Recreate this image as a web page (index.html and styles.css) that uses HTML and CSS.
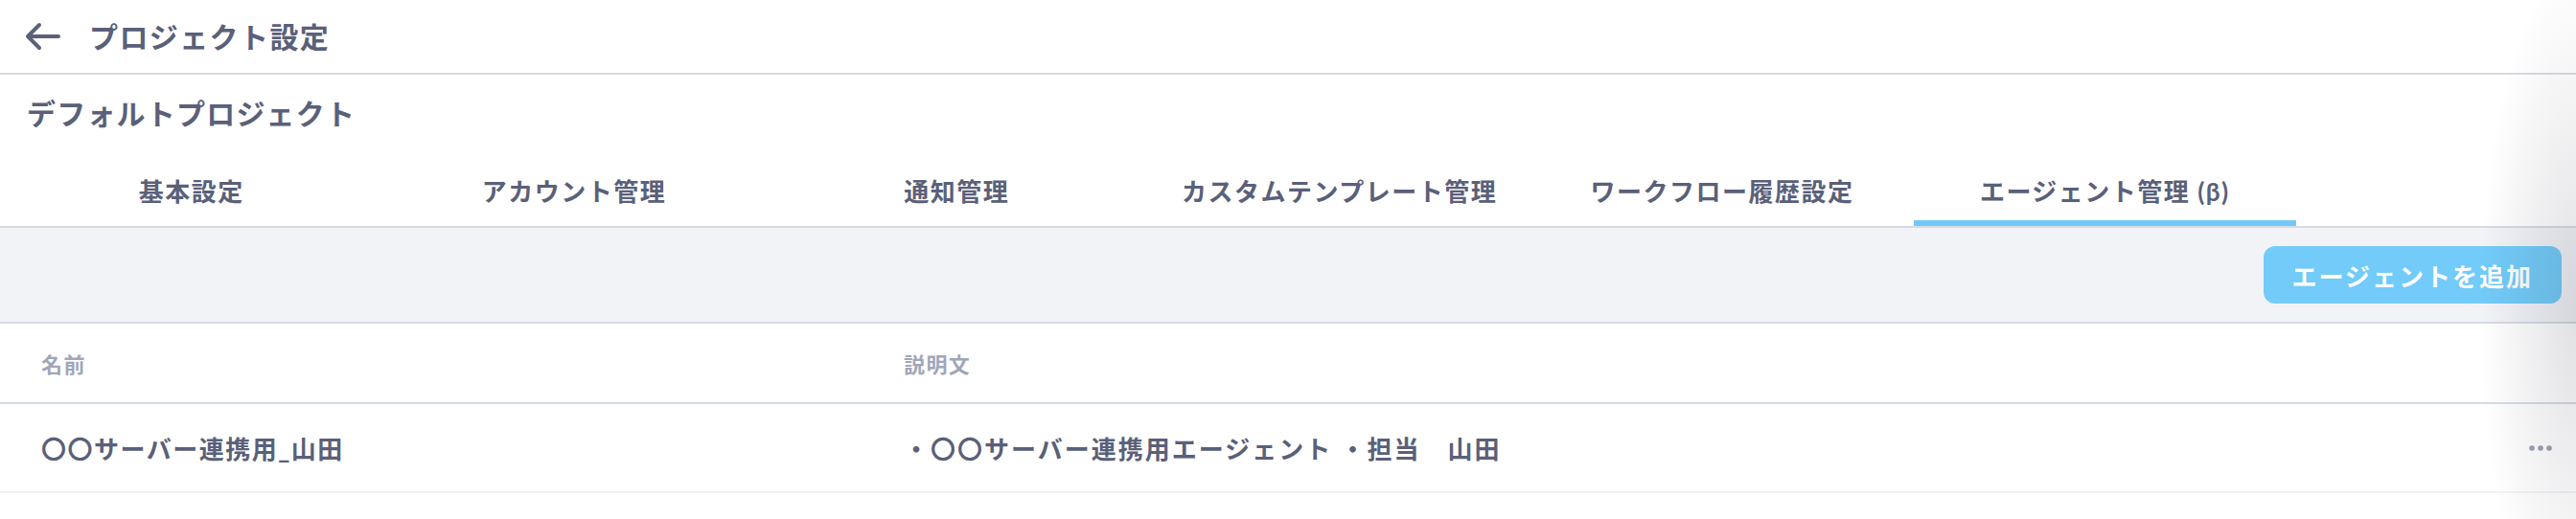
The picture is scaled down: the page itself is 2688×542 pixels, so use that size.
FILE: index.html
```html
<!doctype html>
<html lang="ja">
<head>
<meta charset="utf-8">
<title>プロジェクト設定</title>
<link rel="stylesheet" href="styles.css">
</head>
<body>
<header class="topbar">
  <a class="back" href="#">
    <svg width="38" height="30" viewBox="0 0 38 30">
      <path d="M36 15 H4 M16 3 L4 15 L16 27" fill="none" stroke="#5b6179" stroke-width="4" stroke-linecap="round" stroke-linejoin="round"/>
    </svg>
  </a>
  <h1 class="topbar-title">プロジェクト設定</h1>
</header>

<section class="project">
  <h2 class="project-name">デフォルトプロジェクト</h2>
  <nav class="tabs">
    <a class="tab" href="#">基本設定</a>
    <a class="tab" href="#">アカウント管理</a>
    <a class="tab" href="#">通知管理</a>
    <a class="tab" href="#">カスタムテンプレート管理</a>
    <a class="tab" href="#">ワークフロー履歴設定</a>
    <a class="tab is-active" href="#">エージェント管理 (β)</a>
  </nav>
</section>

<div class="toolbar">
  <button class="btn-add" type="button">エージェントを追加</button>
</div>

<div class="agents">
  <div class="agents-row agents-head">
    <div class="cell">名前</div>
    <div class="cell">説明文</div>
    <div class="cell"></div>
  </div>
  <div class="agents-row">
    <div class="cell">〇〇サーバー連携用_山田</div>
    <div class="cell cell-desc">・〇〇サーバー連携用エージェント ・担当　山田</div>
    <div class="cell cell-menu">
      <svg width="26" height="8" viewBox="0 0 26 8">
        <circle cx="4" cy="4" r="2.8" fill="#9aa0b5"/>
        <circle cx="13" cy="4" r="2.8" fill="#9aa0b5"/>
        <circle cx="22" cy="4" r="2.8" fill="#9aa0b5"/>
      </svg>
    </div>
  </div>
</div>

<div class="edge-shade"></div>
</body>
</html>
```

FILE: styles.css
```css
html, body, h1, h2, div, nav, a, button {
  margin: 0;
  padding: 0;
}

body {
  position: relative;
  min-height: 542px;
  overflow: hidden;
  background: #fff;
  color: #5a6079;
  font-family: Lato, "Noto Sans CJK JP", sans-serif;
  font-weight: 700;
}

a {
  color: inherit;
  text-decoration: none;
}

/* top bar */
.topbar {
  display: flex;
  align-items: center;
  height: 76px;
  padding-left: 25px;
  border-bottom: 2px solid #d6dbe3;
}
.back {
  display: flex;
  width: 38px;
  margin-right: 30px;
}
.topbar-title {
  font-size: 30px;
  letter-spacing: 1.4px;
  font-weight: 700;
  line-height: 36px;
}

/* project name + tabs */
.project {
  border-bottom: 2px solid #d6dbe3;
}
.project-name {
  box-sizing: border-box;
  height: 82px;
  padding: 22px 0 0 28px;
  font-size: 30px;
  letter-spacing: 1.2px;
  line-height: 36px;
  font-weight: 700;
}
.tabs {
  display: flex;
  width: 2396px;
}
.tab {
  flex: 1;
  box-sizing: border-box;
  height: 76px;
  padding-top: 22px;
  text-align: center;
  font-size: 26px;
  letter-spacing: 1.5px;
  line-height: 36px;
  border-bottom: 6px solid transparent;
}
.tab.is-active {
  border-bottom-color: #72c9f7;
}

/* toolbar */
.toolbar {
  display: flex;
  justify-content: flex-end;
  align-items: center;
  height: 98px;
  padding-right: 15px;
  background: #f2f3f7;
  border-bottom: 2px solid #d6dbe3;
}
.btn-add {
  height: 60px;
  padding: 0 30px;
  border: none;
  border-radius: 12px;
  background: #72cbf8;
  color: #fff;
  font-family: inherit;
  font-weight: 700;
  font-size: 26px;
  letter-spacing: 2px;
}

/* agent list */
.agents-row {
  display: grid;
  grid-template-columns: 900px 1fr 64px;
  align-items: center;
  height: 91px;
  border-bottom: 2px solid #f1f2f5;
  font-size: 26px;
  letter-spacing: 1.5px;
}
.agents-head {
  height: 82px;
  border-bottom-color: #d6dbe3;
  color: #a0a6b9;
  font-size: 22px;
  letter-spacing: 1.4px;
}
.cell {
  padding-left: 43px;
}
.cell-desc {
  letter-spacing: 2px;
}
.cell-menu {
  display: flex;
  justify-content: flex-end;
  padding: 0 24px 0 0;
}

/* scroll shade on the right edge */
.edge-shade {
  position: absolute;
  top: 0;
  right: 0;
  width: 100px;
  height: 100%;
  background: radial-gradient(ellipse 100px 360px at 100% 60%, rgba(40, 40, 60, 0.14), rgba(40, 40, 60, 0) 100%);
  pointer-events: none;
}
```
